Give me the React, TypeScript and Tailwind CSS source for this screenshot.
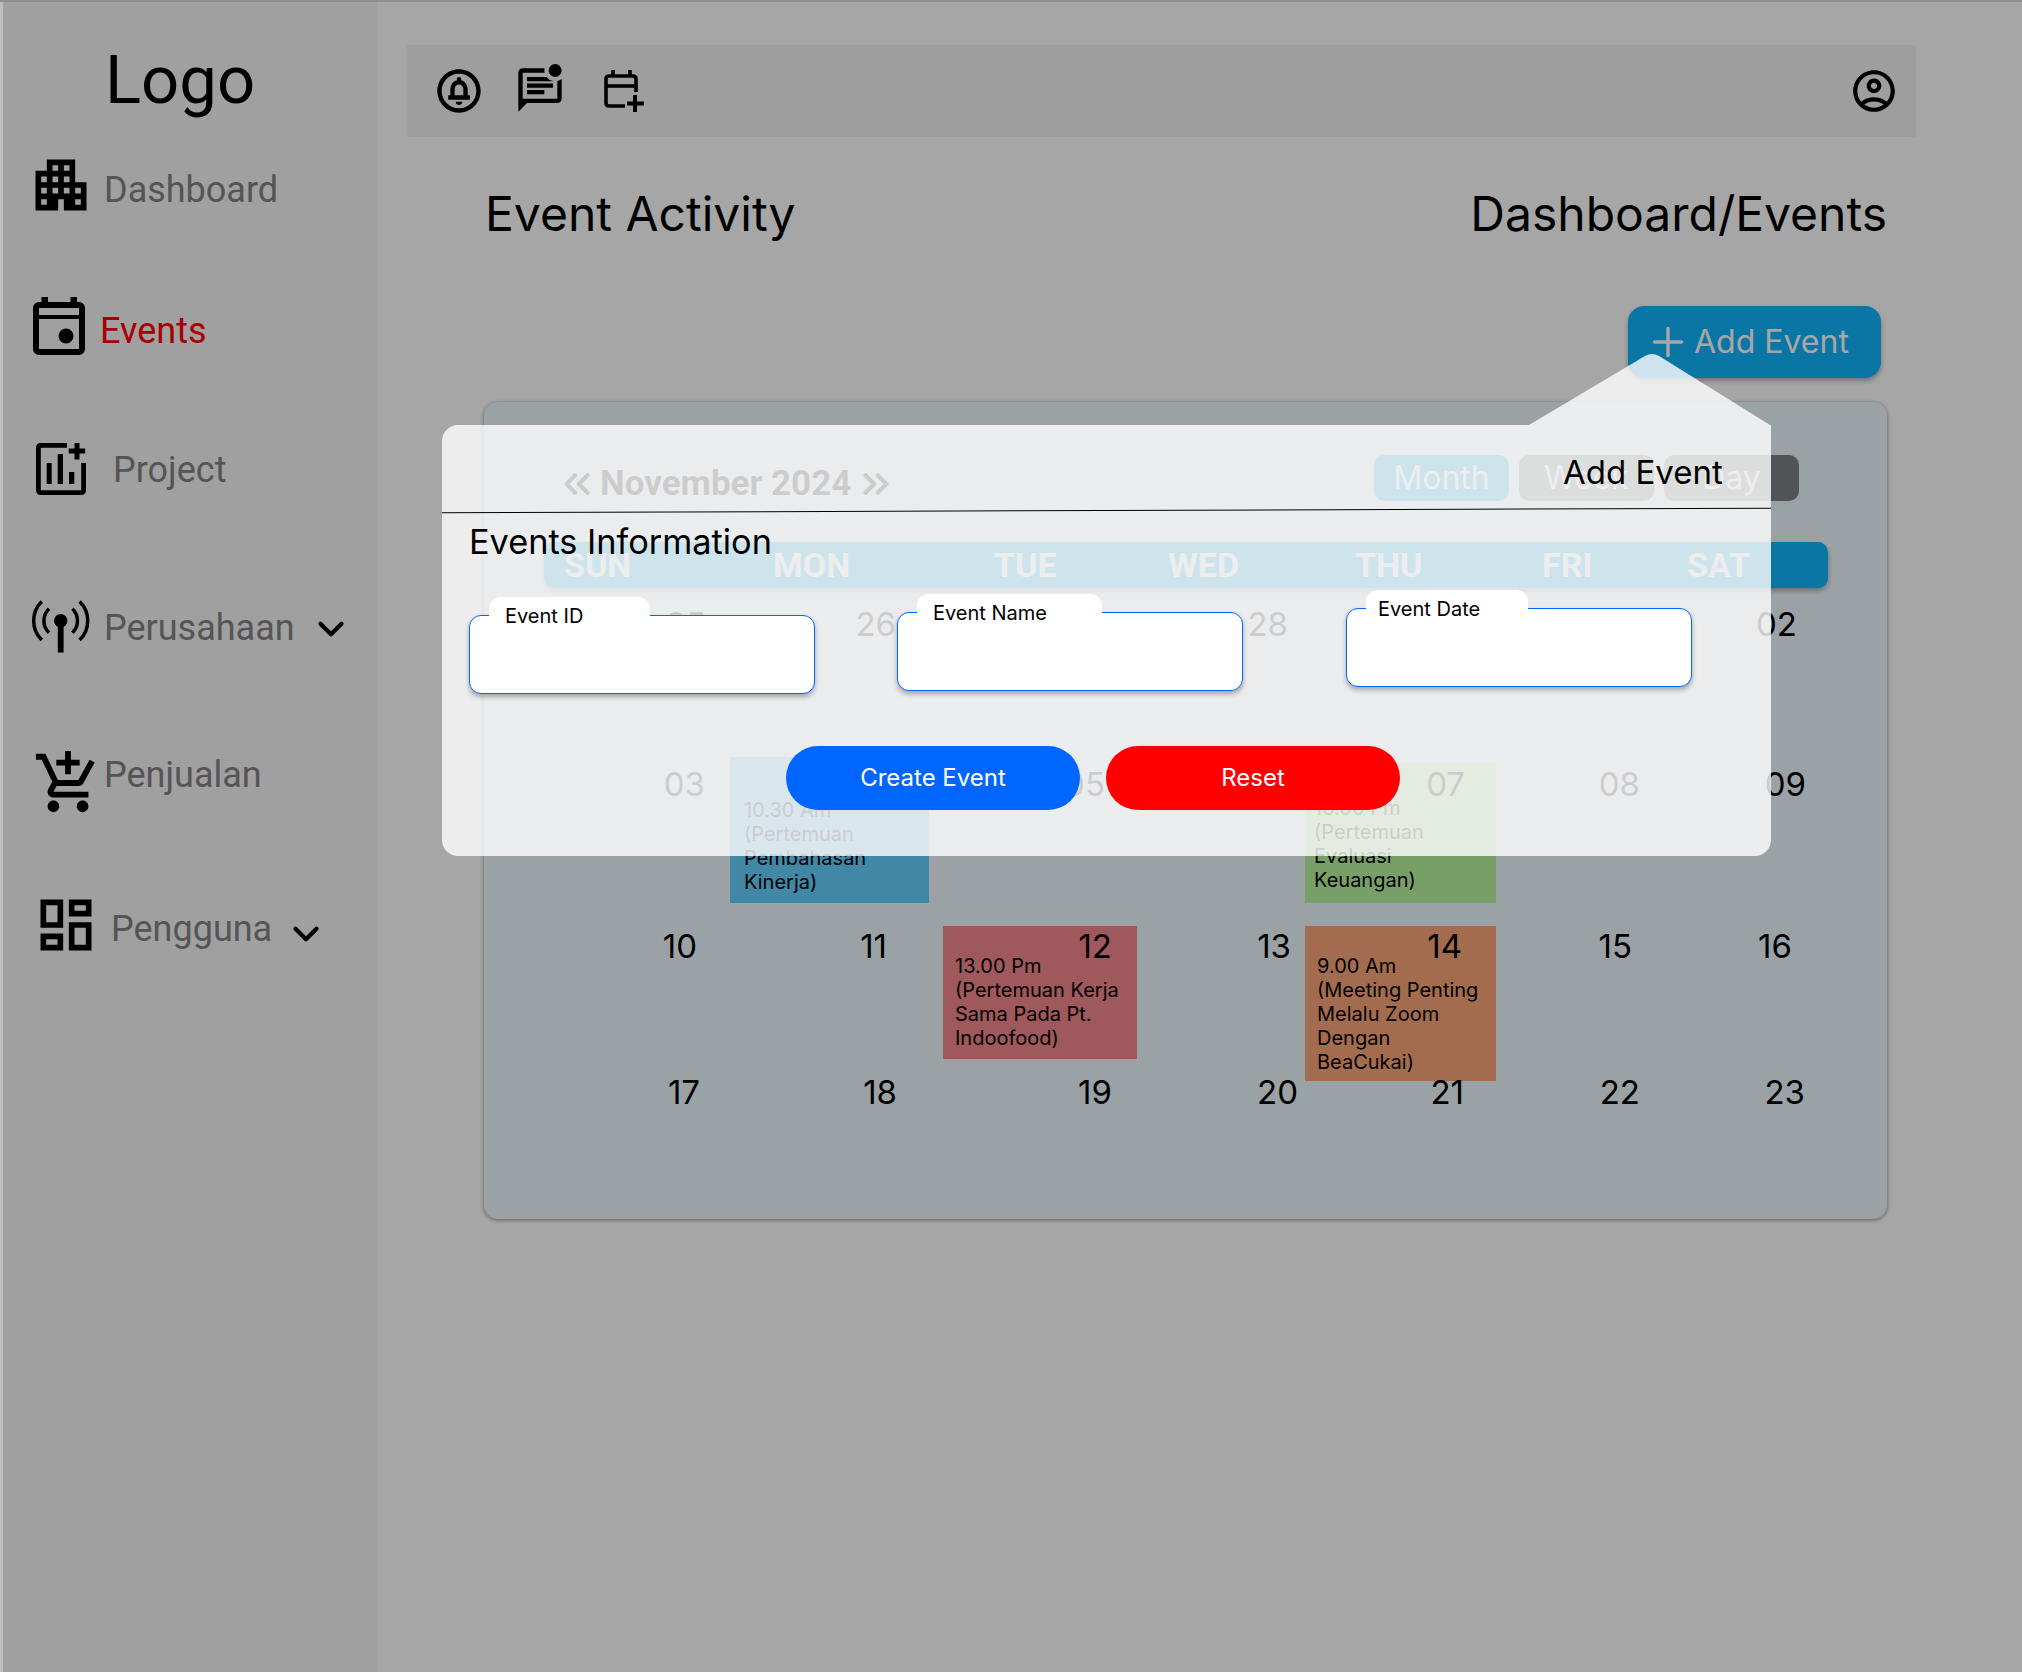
import { ChevronDown, ChevronsLeft, ChevronsRight, Plus } from 'lucide-react';
import {
  MdApartment,
  MdOutlineAddShoppingCart,
  MdOutlineDashboard,
  MdOutlineCircleNotifications,
  MdOutlineMarkUnreadChatAlt,
  MdOutlineAccountCircle,
} from 'react-icons/md';

const inter = "font-['Inter','Liberation_Sans',sans-serif]";
const roboto = "font-['Roboto','Liberation_Sans',sans-serif]";

const weekdays = [
  { label: 'SUN', className: 'w-[209px]' },
  { label: 'MON', className: 'w-[221px]' },
  { label: 'TUE', className: 'w-[174px]' },
  { label: 'WED', className: 'w-[187px]' },
  { label: 'THU', className: 'w-[187px]' },
  { label: 'FRI', className: 'w-[145px]' },
  { label: 'SAT', className: 'w-[100px]' },
];

const trackClass = 'grid grid-cols-[246px_213px_194px_168px_191px_154px_237px] items-start';

function Day({ n, className }: { n: string; className: string }) {
  return <div className={`text-right text-[33px] leading-[40px] text-black ${className}`}>{n}</div>;
}

function EventNote({ lines, className }: { lines: string[]; className: string }) {
  return (
    <div className={`text-[20px] leading-[24px] text-black ${className}`}>
      {lines.map((line) => (
        <div key={line}>{line}</div>
      ))}
    </div>
  );
}

function EventIcon() {
  return (
    <svg viewBox="0 0 52 58" className="w-[52px] h-[58px] shrink-0" fill="none">
      <rect x="3" y="8" width="46" height="47" rx="3" stroke="#000" strokeWidth="6" />
      <rect x="3" y="18" width="46" height="4" fill="#000" />
      <rect x="8.5" y="0" width="6.5" height="8" fill="#000" />
      <rect x="37.5" y="0" width="6.5" height="8" fill="#000" />
      <circle cx="33" cy="39" r="7.5" fill="#000" />
    </svg>
  );
}

function ChartAddIcon() {
  return (
    <svg viewBox="0 0 50 52" className="w-[50px] h-[52px] shrink-0" fill="none" stroke="#000" strokeWidth="4.8">
      <path d="M31 2.4H5Q2.4 2.4 2.4 5V47Q2.4 49.6 5 49.6H45Q47.6 49.6 47.6 47V20" />
      <rect x="10.7" y="20" width="5" height="21" fill="#000" stroke="none" />
      <rect x="21.7" y="11" width="5.3" height="30" fill="#000" stroke="none" />
      <rect x="33" y="29" width="5.3" height="12" fill="#000" stroke="none" />
      <path d="M41 0V16.6M32.7 8H49.2" strokeWidth="5" />
    </svg>
  );
}

function AntennaIcon() {
  return (
    <svg viewBox="0 0 57 53" className="w-[55px] h-[52px] shrink-0 overflow-visible" fill="none" stroke="#000" strokeWidth="3.6">
      <path d="M9.1 0A28 28 0 0 0 9.1 40" />
      <path d="M48.3 0A28 28 0 0 1 48.3 40" />
      <path d="M16.6 7.5A17.4 17.4 0 0 0 16.6 32.5" />
      <path d="M40.8 7.5A17.4 17.4 0 0 1 40.8 32.5" />
      <circle cx="28.7" cy="20" r="7" fill="#000" stroke="none" />
      <rect x="25.7" y="20" width="6" height="33" fill="#000" stroke="none" />
    </svg>
  );
}

function CalendarAddIcon() {
  return (
    <svg viewBox="0 0 40 42" className="w-[40px] h-[42px] ml-[38px] shrink-0" fill="none" stroke="#000" strokeWidth="3.6">
      <path d="M32 22V9Q32 6 29 6H5Q2 6 2 9V33Q2 36 5 36H21" />
      <path d="M2 16H32" />
      <path d="M9 0V6M26 0V6" />
      <path d="M31 25V42M23 33.5H40" strokeWidth="4" />
    </svg>
  );
}

function Field({ label, className, tabClass }: { label: string; className: string; tabClass: string }) {
  return (
    <div className={`relative w-[346px] h-[79px] bg-white border-[1.5px] border-[#0066ff] rounded-[12px] shadow-[0_3px_5px_rgba(0,0,0,0.3)] ${className}`}>
      <div className={`absolute left-[19px] top-[-19px] h-[36px] bg-white rounded-t-[12px] text-[20px] leading-[38px] text-black ${tabClass}`}>
        {label}
      </div>
    </div>
  );
}

export default function App() {
  return (
    <div className={`relative w-[2022px] h-[1672px] overflow-hidden bg-white flex ${inter}`}>
      {/* Sidebar */}
      <aside className={`ml-[3px] w-[374px] shrink-0 bg-[#f6f6f6] ${roboto}`}>
        <div className="ml-[102px] mt-[38px] h-[84px] text-[67px] leading-[84px] text-black">Logo</div>
        <div className="mt-[35px] h-[60px] flex items-center">
          <MdApartment size={68} className="shrink-0 ml-[24px] -mt-[4px] text-black" />
          <span className="ml-[9px] mt-[6px] text-[36px] text-[#838383]">Dashboard</span>
        </div>
        <div className="mt-[81px] h-[60px] flex items-center">
          <div className="ml-[30px] -mt-[4px]">
            <EventIcon />
          </div>
          <span className="ml-[15px] mt-[6px] text-[36px] text-[#ff0000]">Events</span>
        </div>
        <div className="mt-[82px] h-[60px] flex items-center">
          <div className="ml-[33px] -mt-[2px]">
            <ChartAddIcon />
          </div>
          <span className="ml-[27px] text-[36px] text-[#838383]">Project</span>
        </div>
        <div className="mt-[98px] h-[60px] flex items-center">
          <div className="ml-[30px] -mt-[2px]">
            <AntennaIcon />
          </div>
          <span className="ml-[16px] text-[36px] text-[#838383]">Perusahaan</span>
          <ChevronDown size={42} strokeWidth={2.4} className="ml-[15px] mt-[2px] text-black" />
        </div>
        <div className="mt-[92px] h-[60px] flex items-center">
          <MdOutlineAddShoppingCart size={70} className="shrink-0 ml-[30px] mt-[6px] text-black" />
          <span className="ml-[1px] -mt-[10px] text-[36px] text-[#838383]">Penjualan</span>
        </div>
        <div className="mt-[85px] h-[60px] flex items-center">
          <MdOutlineDashboard size={68} className="shrink-0 ml-[29px] text-black" />
          <span className="ml-[11px] mt-[8px] text-[36px] text-[#838383]">Pengguna</span>
          <ChevronDown size={42} strokeWidth={2.4} className="ml-[13px] mt-[18px] text-black" />
        </div>
      </aside>

      {/* Main */}
      <main className="flex-1 min-w-0">
        <div className="ml-[30px] mt-[45px] w-[1509px] h-[92px] bg-[#f3f3f3] flex items-center pl-[26px] pr-[17px]">
          <MdOutlineCircleNotifications size={52} className="text-black" />
          <MdOutlineMarkUnreadChatAlt size={52} className="ml-[29px] -mt-[2px] text-black" />
          <CalendarAddIcon />
          <MdOutlineAccountCircle size={50} className="ml-auto text-black" />
        </div>

        <div className="mt-[47px] h-[60px] flex items-center justify-between pl-[108px] pr-[135px] text-[48px] leading-[60px] text-black">
          <span>Event Activity</span>
          <span>Dashboard/Events</span>
        </div>

        <div className="mt-[62px] flex justify-end pr-[141px]">
          <button className="w-[253px] h-[72px] rounded-[16px] bg-[#10b6ff] shadow-[0_3px_5px_rgba(0,0,0,0.3)] flex items-center pl-[17px] text-white text-[32px]">
            <Plus size={46} strokeWidth={1.8} />
            <span className="ml-[3px]">Add Event</span>
          </button>
        </div>

        {/* Calendar */}
        <section className="ml-[107px] mt-[24px] w-[1403px] h-[817px] rounded-[14px] bg-[#edf9fe] shadow-[0_1px_4px_rgba(0,0,0,0.45)]">
          <div className="pt-[53px] flex items-start pl-[79px]">
            <div className="flex items-center mt-[6px] h-[46px] text-[35px] font-bold text-black font-['Roboto']">
              <ChevronsLeft size={42} strokeWidth={2.4} className="-ml-[7px]" />
              <span className="ml-[2px]">November 2024</span>
              <ChevronsRight size={42} strokeWidth={2.4} className="ml-[4px]" />
            </div>
            <div className="ml-auto mr-[88px] flex gap-[10px]">
              <div className="w-[135px] h-[46px] rounded-[10px] bg-[#10b6ff] text-white text-[32px] leading-[46px] text-center">Month</div>
              <div className="w-[135px] h-[46px] rounded-[10px] bg-[#7b8186] text-white text-[32px] leading-[46px] text-center">Week</div>
              <div className="w-[135px] h-[46px] rounded-[10px] bg-[#7b8186] text-white text-[32px] leading-[46px] text-center">Day</div>
            </div>
          </div>

          <div className={`ml-[60px] mt-[35px] w-[1284px] h-[46px] rounded-[10px] bg-[#10b6ff] shadow-[0_3px_5px_rgba(0,0,0,0.3)] flex items-center pl-[20px] text-white text-[34px] font-bold ${roboto}`}>
            {weekdays.map((d) => (
              <span key={d.label} className={`shrink-0 ${d.className}`}>
                {d.label}
              </span>
            ))}
          </div>

          <div className={`mt-[16px] h-[153px] ${trackClass}`}>
            <Day n="25" className="pr-[24px]" />
            <Day n="26" className="pr-[47px]" />
            <Day n="27" className="pr-[25px]" />
            <Day n="28" className="pr-[17px]" />
            <Day n="29" className="pr-[31px]" />
            <Day n="01" className="pr-[10px]" />
            <Day n="02" className="pr-[90px]" />
          </div>

          <div className={`h-[169px] ${trackClass}`}>
            <Day n="03" className="pr-[25px] pt-[7px]" />
            <div className="w-[199px] h-[146px] bg-[#64cfff]">
              <Day n="04" className="pr-[36px] pt-[7px]" />
              <EventNote className="pl-[14px] -mt-[6px]" lines={['10.30 Am', '(Pertemuan', 'Pembahasan', 'Kinerja)']} />
            </div>
            <Day n="05" className="pr-[32px] pt-[7px]" />
            <Day n="06" className="pr-[15px] pt-[7px]" />
            <div className="mt-[6px] h-[140px] bg-[#b9f59f]">
              <Day n="07" className="pr-[31px] pt-[1px]" />
              <EventNote className="pl-[9px] -mt-[8px]" lines={['13.00 Pm', '(Pertemuan', 'Evaluasi', 'Keuangan)']} />
            </div>
            <Day n="08" className="pr-[10px] pt-[7px]" />
            <Day n="09" className="pr-[81px] pt-[7px]" />
          </div>

          <div className={`h-[146px] ${trackClass}`}>
            <Day n="10" className="pr-[33px]" />
            <Day n="11" className="pr-[56px]" />
            <div className="h-[133px] bg-[#f5878d]">
              <Day n="12" className="pr-[25px]" />
              <EventNote className="pl-[12px] -mt-[12px]" lines={['13.00 Pm', '(Pertemuan Kerja', 'Sama Pada Pt.', 'Indoofood)']} />
            </div>
            <Day n="13" className="pr-[14px]" />
            <div className="h-[155px] bg-[#fba678]">
              <Day n="14" className="pr-[34px]" />
              <EventNote className="pl-[12px] -mt-[12px]" lines={['9.00 Am', '(Meeting Penting', 'Melalu Zoom', 'Dengan', 'BeaCukai)']} />
            </div>
            <Day n="15" className="pr-[18px]" />
            <Day n="16" className="pr-[95px]" />
          </div>

          <div className={trackClass}>
            <Day n="17" className="pr-[30px]" />
            <Day n="18" className="pr-[46px]" />
            <Day n="19" className="pr-[25px]" />
            <Day n="20" className="pr-[7px]" />
            <Day n="21" className="pr-[32px]" />
            <Day n="22" className="pr-[10px]" />
            <Day n="23" className="pr-[82px]" />
          </div>
        </section>
      </main>

      {/* Dim layer */}
      <div className="absolute inset-0 bg-black/35" />
      <div className="absolute left-0 top-0 bottom-0 w-[3px] bg-[#bdbdbd]" />
      <div className="absolute left-0 right-0 top-0 h-[2px] bg-[#8e8e8e]" />

      {/* Add Event popover */}
      <svg viewBox="0 0 241 72" className="absolute left-[1529px] top-[353px] w-[241px] h-[72px]">
        <path d="M0 72 L116 3 Q123 -1 130 3 L241 72 Z" fill="#fff" fillOpacity="0.8" />
      </svg>
      <div className="absolute left-[442px] top-[425px] w-[1329px] h-[431px] rounded-[16px] rounded-tr-none bg-white/80">
        <div className="h-[85px] pt-[24px] pl-[1121px] text-[33px] leading-[46px] text-black">Add Event</div>
        <div className="h-px bg-black -rotate-[0.2deg]" />
        <div className="pl-[27px] pt-[10px] text-[34.3px] leading-[42px] text-black">Events Information</div>
        <div className="mt-[45px] pl-[27px] flex items-start">
          <Field label="Event ID" className="mt-[7px]" tabClass="w-[161px] pl-[16px]" />
          <Field label="Event Name" className="ml-[82px] mt-[4px]" tabClass="w-[185px] pl-[16px]" />
          <Field label="Event Date" className="ml-[103px]" tabClass="w-[162px] pl-[12px]" />
        </div>
        <div className="mt-[52px] pl-[344px] flex gap-[26px]">
          <button className="w-[294px] h-[64px] rounded-[32px] bg-[#0066ff] text-white text-[24px]">Create Event</button>
          <button className="w-[294px] h-[64px] rounded-[32px] bg-[#ff0000] text-white text-[24px]">Reset</button>
        </div>
      </div>
    </div>
  );
}
